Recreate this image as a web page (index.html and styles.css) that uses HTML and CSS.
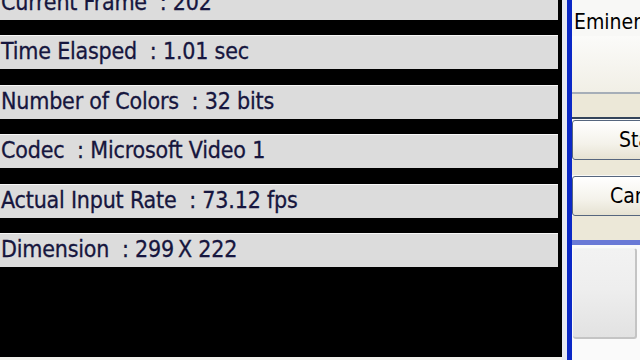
FILE: index.html
```html
<!DOCTYPE html>
<html>
<head>
<meta charset="utf-8">
<link rel="stylesheet" href="styles.css">
</head>
<body>
<div class="screen">
  <div class="viewer">
    <div class="stats">
      <div class="row">Current Frame  : 202</div>
      <div class="row">Time Elasped  : 1.01 sec</div>
      <div class="row">Number of Colors  : 32 bits</div>
      <div class="row">Codec  : Microsoft Video 1</div>
      <div class="row">Actual Input Rate  : 73.12 fps</div>
      <div class="row">Dimension  : 299&#8201;X 222</div>
    </div>
  </div>
  <div class="sep"></div>
  <div class="side">
    <div class="name">Eminem</div>
    <div class="field"></div>
    <div class="field2"></div>
    <div class="btn">Start</div>
    <div class="spacer"></div>
    <div class="btn">Cancel</div>
    <div class="spacer2"></div>
    <div class="group">
      <div class="box"></div>
    </div>
  </div>
</div>
</body>
</html>
```
FILE: styles.css
```css
html, body {
  margin: 0;
  padding: 0;
  background: #f2f2ee;
}
.screen {
  width: 640px;
  height: 360px;
  overflow: hidden;
  display: flex;
  background: #f2f2ee;
}
.viewer {
  width: 562px;
  height: 357px;
  flex: none;
  box-sizing: border-box;
  padding-right: 4px;
  background: #000;
  overflow: hidden;
}
.stats {
  display: flex;
  flex-direction: column;
  gap: 15.5px;
  margin-top: -14.5px;
}
.row {
  height: 34px;
  box-sizing: border-box;
  border-top: 1px solid #f7f7f7;
  background: #dcdcdc;
  padding-left: 1px;
  font-family: "DejaVu Sans Condensed", "DejaVu Sans", sans-serif;
  font-size: 23px;
  line-height: 30px;
  color: #16163e;
  -webkit-text-stroke: 0.3px #16163e;
  letter-spacing: -0.2px;
  white-space: pre;
}
.sep {
  width: 5px;
  flex: none;
  background: #e6e8f2;
}
.side {
  width: 140px;
  flex: none;
  border-left: 5px solid #0b28c6;
  background: #f8f8f6;
  display: flex;
  flex-direction: column;
}
.name {
  height: 36px;
  padding-left: 2px;
  font-family: "DejaVu Sans Condensed", "DejaVu Sans", sans-serif;
  font-size: 21px;
  line-height: 44px;
  color: #000;
  white-space: nowrap;
}
.field {
  height: 56px;
  background: linear-gradient(#fbfbf9, #f1efe6);
  border-bottom: 2px solid #a6aeb8;
}
.field2 {
  height: 23px;
  background: #ece8d8;
  border-bottom: 2px solid #34445a;
}
.btn {
  height: 38px;
  margin-top: 1px;
  border: 1px solid #56667e;
  border-radius: 3px;
  background: linear-gradient(#ffffff, #f4f2ea 60%, #e6e2d2);
  font-family: "DejaVu Sans Condensed", "DejaVu Sans", sans-serif;
  font-size: 21px;
  line-height: 38px;
  text-align: center;
  color: #000;
}
.spacer {
  height: 15px;
  background: #ece8d8;
}
.spacer2 {
  height: 24px;
  background: #ece8d8;
}
.group {
  border-top: 5px solid #6a7ad6;
  background: #fafafa;
  flex: 1;
  padding: 3px 0 0 1px;
}
.box {
  width: 62px;
  height: 88px;
  border-radius: 3px;
  border-right: 2px solid #c4c4c4;
  border-bottom: 2px solid #c4c4c4;
  border-top: 1px solid #f4f4f4;
  background: linear-gradient(#f2f2f2, #eeeeee 45%, #e2e2e2);
}
```
